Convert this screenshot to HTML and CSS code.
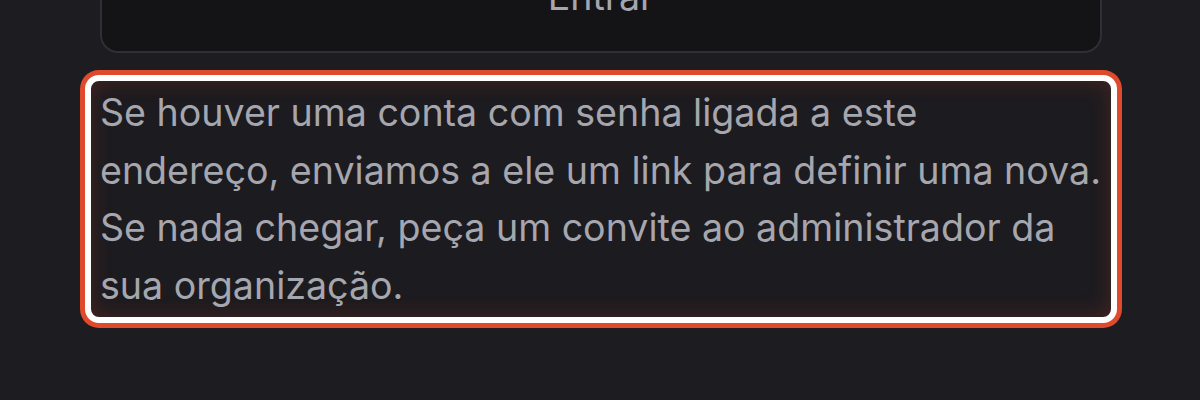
FILE: index.html
```html
<!DOCTYPE html>
<html lang="pt">
<head>
<meta charset="utf-8">
<link rel="stylesheet" href="styles.css">
</head>
<body>
<main class="panel">
  <button class="submit" type="button">Entrar</button>
  <p class="notice">Se houver uma conta com senha ligada a este endereço, enviamos a ele um link para definir uma nova. Se nada chegar, peça um convite ao administrador da sua organização.</p>
</main>
</body>
</html>
```
FILE: styles.css
```css
html, body {
  margin: 0;
  padding: 0;
  background: #1c1c21;
  height: 400px;
  overflow: hidden;
}
body {
  font-family: Inter, "Noto Sans", sans-serif;
  color: #a6a6ae;
}
.panel {
  width: 1032px;
  margin: -57px 0 0 85px;
  display: flex;
  flex-direction: column;
}
.submit {
  box-sizing: border-box;
  margin: 0 15px;
  height: 110px;
  width: 1002px;
  background: #141417;
  border: 2px solid #2f2f35;
  border-radius: 18px;
  color: #a6a6ae;
  font-family: inherit;
  font-size: 37.6px;
  display: flex;
  align-items: center;
  justify-content: center;
  padding: 0 0 4px 0;
}
.notice {
  box-sizing: border-box;
  margin: 22px 0 0 0;
  padding: 3px 8px 2px 9px;
  border: 6px solid #ffffff;
  border-radius: 14px;
  box-shadow: 0 0 0 5px #e04a2c, inset 0 0 22px rgba(224, 74, 44, 0.22);
  background: #1c1b1f;
  font-size: 37.6px;
  line-height: 57.7px;
  color: #a6a6ae;
}
```
